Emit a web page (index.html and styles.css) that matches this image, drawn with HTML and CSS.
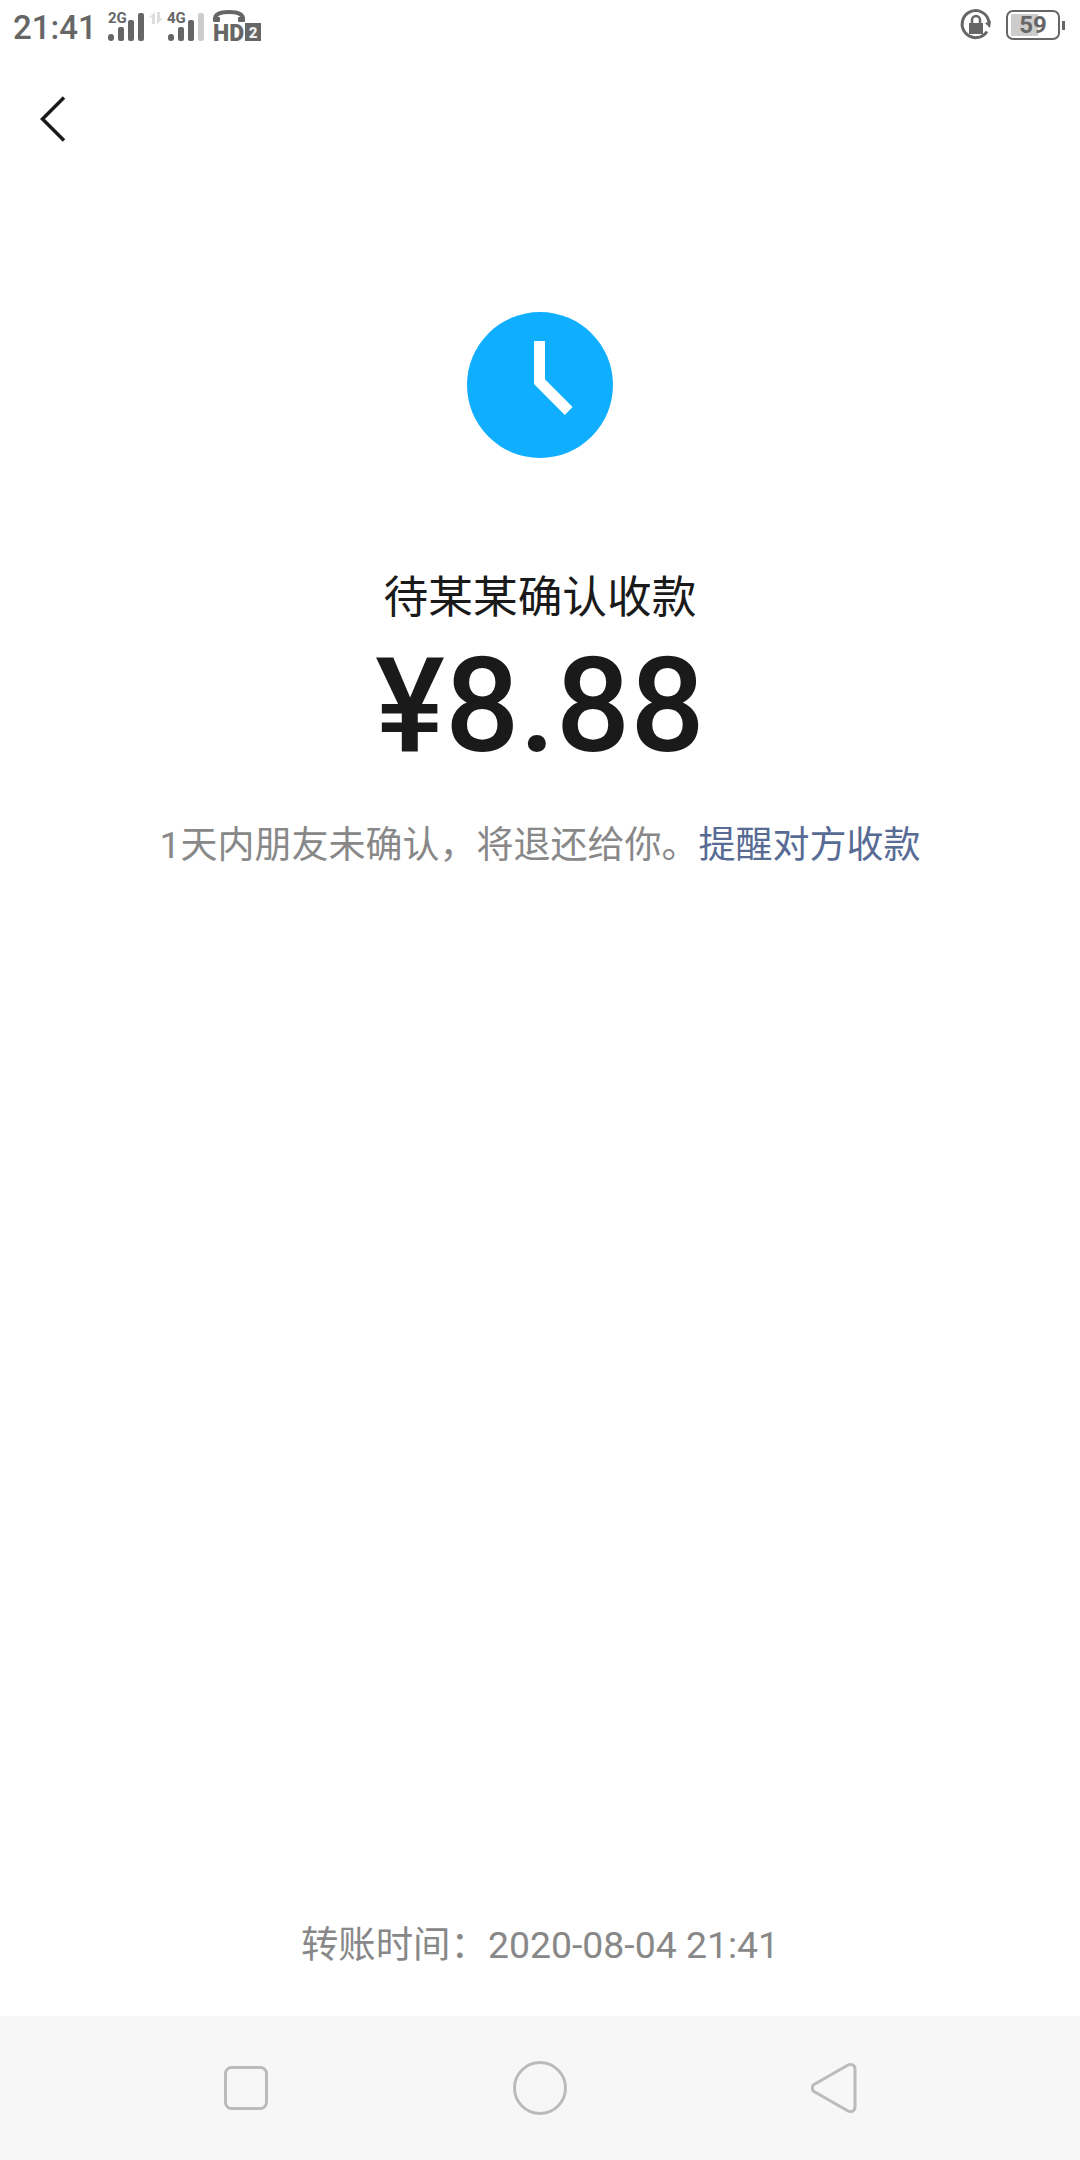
FILE: index.html
```html
<!DOCTYPE html>
<html lang="zh-CN">
<head>
    <meta charset="UTF-8">
    <meta name="viewport" content="width=device-width, initial-scale=1.0">
    <title>待确认收款</title>
    <link rel="stylesheet" href="styles.css">
</head>
<body>

    <div class="page">

        <!-- Status bar -->
        <div class="status-bar">
            <div class="status-left">
                <span class="clock">21:41</span>
                <svg class="sig-2g" width="37" height="32" viewBox="0 0 37 32">
                    <text x="0" y="14" class="sig-label">2G</text>
                    <rect x="0" y="25" width="6" height="7" rx="3" fill="#666"/>
                    <rect x="10" y="18" width="6" height="14" rx="2" fill="#666"/>
                    <rect x="20" y="11" width="6" height="21" rx="2" fill="#666"/>
                    <rect x="30" y="4" width="6" height="28" rx="2" fill="#666"/>
                </svg>
                <svg class="sig-arrows" width="14" height="12" viewBox="0 0 14 12">
                    <path d="M6 0v12H3V5.500H0zM8 12V0h3v6.500h3z" fill="#ddd"/>
                </svg>
                <svg class="sig-4g" width="40" height="32" viewBox="0 0 40 32">
                    <text x="0" y="14" class="sig-label">4G</text>
                    <rect x="1" y="25" width="6" height="7" rx="3" fill="#666"/>
                    <rect x="11" y="18" width="6" height="14" rx="2" fill="#666"/>
                    <rect x="21" y="11" width="6" height="21" rx="2" fill="#666"/>
                    <rect x="31" y="4" width="6" height="28" rx="2" fill="#ccc"/>
                </svg>
                <svg class="sig-hd" width="48" height="32" viewBox="0 0 48 32">
                    <path d="M2 10C2 5 8 3 16 3s14 2 14 7" fill="none" stroke="#666" stroke-width="4"/>
                    <rect x="0" y="8" width="7" height="5" rx="1" fill="#666"/>
                    <rect x="25" y="8" width="7" height="5" rx="1" fill="#666"/>
                    <text x="0" y="32" class="hd-label">HD</text>
                    <rect x="32" y="14" width="16" height="18" fill="#666"/>
                    <text x="40" y="29" class="hd-num">2</text>
                </svg>
            </div>
            <div class="status-right">
                <svg width="32" height="32" viewBox="0 0 32 32">
                    <path d="M27 22.500A13.500 13.500 0 1 1 29 13" fill="none" stroke="#666" stroke-width="3"/>
                    <path d="M25 14l5 5 1-7z" fill="#666"/>
                    <rect x="9" y="14" width="14" height="11" fill="#666"/>
                    <path d="M12 14v-3a4 4 0 0 1 8 0v3" fill="none" stroke="#666" stroke-width="2.500"/>
                </svg>
                <div class="battery">
                    <div class="battery-level"></div>
                    <span class="battery-num">59</span>
                </div>
                <div class="battery-tip"></div>
            </div>
        </div>

        <!-- Back -->
        <div class="toolbar">
            <svg width="26" height="46" viewBox="0 0 26 46">
                <path d="M24 1.500L2.500 23 24 44.500" fill="none" stroke="#1a1a1a" stroke-width="3.500"/>
            </svg>
        </div>

        <div class="content">
            <svg class="clock-icon" width="146" height="146" viewBox="0 0 146 146">
                <circle cx="73" cy="73" r="73" fill="#10aeff"/>
                <path d="M72.500 29v40.700l29.200 29.300" fill="none" stroke="#fff" stroke-width="11"/>
            </svg>
            <div class="title">待某某确认收款</div>
            <div class="amount">¥8.88</div>
            <div class="note">1天内朋友未确认，将退还给你。<a class="note-link">提醒对方收款</a></div>
        </div>

        <div class="time">转账时间：2020-08-04 21:41</div>

        <!-- Navigation bar -->
        <div class="nav-bar">
            <div class="nav-item">
                <svg width="44" height="44" viewBox="0 0 44 44">
                    <rect x="1.500" y="1.500" width="41" height="41" rx="6" fill="none" stroke="#bbb" stroke-width="3"/>
                </svg>
            </div>
            <div class="nav-item">
                <svg width="54" height="54" viewBox="0 0 54 54">
                    <circle cx="27" cy="27" r="25.500" fill="none" stroke="#bbb" stroke-width="3"/>
                </svg>
            </div>
            <div class="nav-item">
                <svg width="46" height="52" viewBox="0 0 46 52">
                    <path d="M3 22.500L37 3c3-1.500 7 0 7 4v38c0 4-4 5.500-7 4L3 29.500c-2.500-1.500-2.500-5.500 0-7z" fill="none" stroke="#bbb" stroke-width="3"/>
                </svg>
            </div>
        </div>

    </div>

</body>
</html>
```

FILE: styles.css
```css
body {
    margin: 0;
    background-color: #fff;
    font-family: Roboto, "Noto Sans CJK SC", sans-serif;
}

.page {
    display: flex;
    flex-direction: column;
    height: 2160px;
}

.status-bar {
    display: flex;
    justify-content: space-between;
    align-items: center;
    height: 50px;
    padding: 0 15px 0 13px;
    color: #666;
}

.status-bar svg {
    overflow: visible;
}

.status-left, .status-right {
    display: flex;
    align-items: center;
}

.clock {
    padding-top: 5px;
    font-size: 33px;
    font-weight: 500;
    line-height: 50px;
    width: 95px;
}

.sig-arrows {
    margin: -14px 4px 0 4px;
}

.sig-hd {
    margin-left: 6px;
}

.sig-label {
    font-size: 15px;
    font-weight: 700;
    fill: #666;
}

.hd-label {
    font-size: 23px;
    font-weight: 900;
    fill: #666;
}

.hd-num {
    font-size: 15px;
    font-weight: 900;
    fill: #f0f0f0;
    text-anchor: middle;
}

.status-right svg {
    margin-right: 14px;
}

.battery {
    position: relative;
    width: 50px;
    height: 26px;
    border: 2px solid #666;
    border-radius: 7px;
    text-align: center;
}

.battery-level {
    position: absolute;
    left: 3px;
    top: 2px;
    width: 27px;
    height: 22px;
    background-color: #ccc;
}

.battery-num {
    position: relative;
    font-size: 24px;
    font-weight: 700;
    line-height: 26px;
}

.battery-tip {
    width: 3px;
    height: 9px;
    margin-left: 2px;
    background-color: #666;
}

.toolbar {
    display: flex;
    padding: 46px 0 0 40px;
    height: 50px;
}

.content {
    flex: 1;
    display: flex;
    flex-direction: column;
    align-items: center;
    padding-top: 166px;
}

.clock-icon {
    display: block;
}

.title {
    margin-top: 110px;
    font-size: 44.7px;
    line-height: 60px;
    color: #1a1a1a;
}

.amount {
    margin-top: 8px;
    font-size: 131px;
    font-weight: 500;
    line-height: 140px;
    color: #1a1a1a;
}

.note {
    margin-top: 45px;
    font-size: 37px;
    line-height: 50px;
    color: #888;
}

.note-link {
    color: #576b95;
}

.time {
    margin-bottom: 46px;
    font-size: 37.4px;
    line-height: 50px;
    text-align: center;
    color: #888;
}

.nav-bar {
    display: flex;
    justify-content: center;
    align-items: center;
    height: 144px;
    background-color: #f7f7f7;
}

.nav-item {
    display: flex;
    justify-content: center;
    width: 294px;
}
```
